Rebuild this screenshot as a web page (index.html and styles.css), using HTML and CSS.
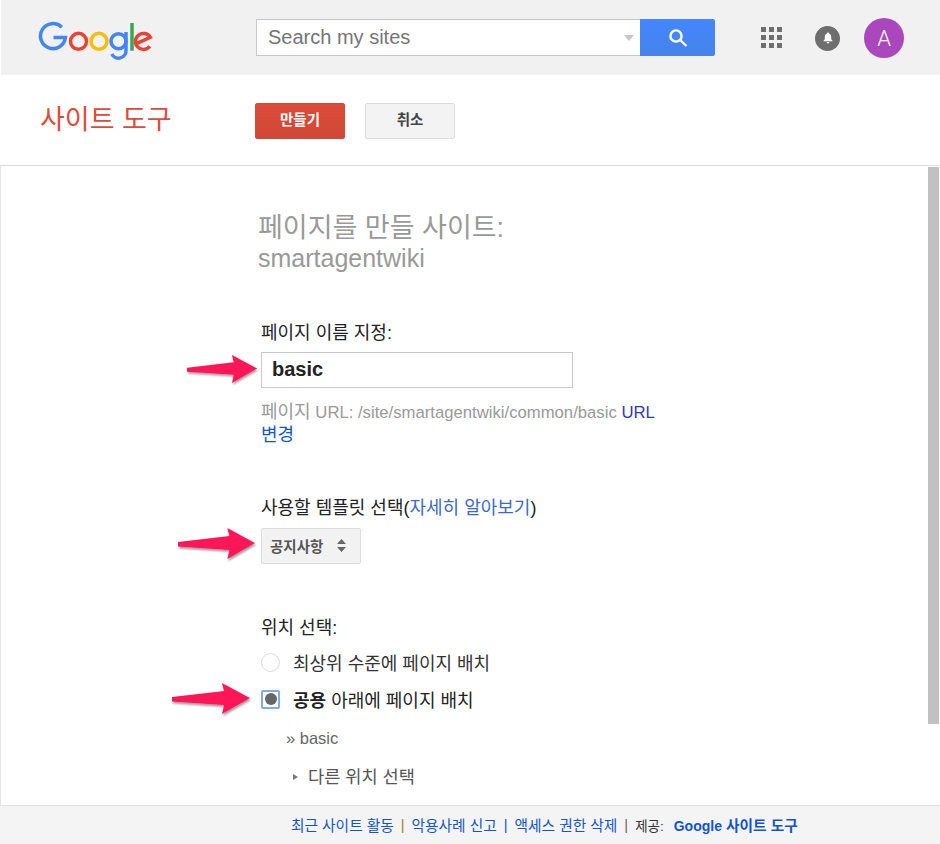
FILE: index.html
```html
<!DOCTYPE html>
<html lang="ko">
<head>
<meta charset="utf-8">
<title>사이트 도구</title>
<link rel="stylesheet" href="styles.css">
</head>
<body>
<header class="topbar">
  <svg class="logo" role="img" aria-label="Google" width="116" height="40" viewBox="37 20 116 40" fill="none" stroke-width="3.500">
    <path stroke="#4285f4" d="M60.800 27.200A12.500 12.500 0 1 0 64.400 37.500H52.500"/>
    <circle stroke="#ea4335" cx="77.500" cy="41.300" r="8"/>
    <circle stroke="#fbbc05" cx="98" cy="41.300" r="8"/>
    <circle stroke="#4285f4" cx="117.500" cy="41.300" r="7.500"/>
    <path stroke="#4285f4" d="M125 32V50.500A7.500 7.500 0 0 1 110.800 54"/>
    <path stroke="#34a853" d="M131 23V50.700"/>
    <path stroke="#ea4335" d="M148.800 46.300A8 8 0 1 1 149.300 37.300L136 43.300"/>
  </svg>
  <div class="search">
    <div class="search-box"><span class="search-text">Search my sites</span><span class="search-caret"></span></div>
    <div class="search-btn">
      <svg width="20" height="20" viewBox="0 0 20 20" fill="none" stroke="#fff" stroke-width="2.400"><circle cx="8" cy="8" r="5.600"/><path d="M12.200 12l6.300 6"/></svg>
    </div>
  </div>
  <div class="top-icons">
    <div class="apps"><i></i><i></i><i></i><i></i><i></i><i></i><i></i><i></i><i></i></div>
    <div class="bell">
      <svg width="14" height="14" viewBox="0 0 14 14" fill="#fff"><path d="M7 1.500c.7 0 1.100.5 1.100 1 1.500.5 2.100 1.700 2.100 3.300v2.500l1.300 1.400v.6h-9v-.6l1.300-1.400v-2.500c0-1.600.6-2.800 2.100-3.300 0-.5.4-1 1.100-1zM5.600 11h2.800c0 .8-.6 1.400-1.400 1.400s-1.400-.6-1.400-1.400z"/></svg>
    </div>
    <div class="avatar">A</div>
  </div>
</header>
<section class="toolbar">
  <h1 class="site-title">사이트 도구</h1>
  <button class="btn btn-primary">만들기</button>
  <button class="btn btn-default">취소</button>
</section>
<main class="content">
  <div class="scrollbar"></div>
  <div class="form">
    <h2 class="heading">페이지를 만들 사이트:<br><span class="heading-latin">smartagentwiki</span></h2>
    <label class="label name-label">페이지 이름 지정:</label>
    <div class="with-arrow">
      <svg class="arrow arrow-1" viewBox="0 0 79 31" preserveAspectRatio="none"><use href="#arrow"/></svg>
      <div class="name-input">basic</div>
    </div>
    <p class="url"><span class="ko">페이지</span> URL: /site/smartagentwiki/common/basic <a class="link-dark">URL</a><br><a class="ko">변경</a></p>
    <label class="label tpl-label">사용할 템플릿 선택(<a>자세히 알아보기</a>)</label>
    <div class="with-arrow">
      <svg class="arrow arrow-2" viewBox="0 0 79 31" preserveAspectRatio="none"><use href="#arrow"/></svg>
      <div class="select">공지사항
        <svg width="11" height="15" viewBox="0 0 11 15" fill="#666"><path d="M5.500 1l4.500 5h-9zM1 9h9l-4.500 5z"/></svg>
      </div>
    </div>
    <label class="label loc-label">위치 선택:</label>
    <div class="radio-row first"><span class="radio"></span><span>최상위 수준에 페이지 배치</span></div>
    <div class="radio-row with-arrow">
      <svg class="arrow arrow-3" viewBox="0 0 79 31" preserveAspectRatio="none"><use href="#arrow"/></svg>
      <span class="radio checked"></span><span><b>공용</b> 아래에 페이지 배치</span>
    </div>
    <div class="crumb">» basic</div>
    <div class="other"><span class="tri"></span>다른 위치 선택</div>
  </div>
</main>
<footer class="footer">
  <a>최근 사이트 활동</a><span class="sep sep-gold">|</span><a>악용사례 신고</a><span class="sep sep-blue">|</span><a>액세스 권한 삭제</a><span class="sep sep-dark">|</span><span class="by">제공:</span><a class="brand"><span class="brand-latin">Google</span> 사이트 도구</a>
</footer>
<svg class="defs" width="0" height="0">
  <defs>
    <filter id="sh" x="-10%" y="-20%" width="125%" height="150%"><feDropShadow dx="1" dy="2" stdDeviation="1.200" flood-color="#000" flood-opacity=".4"/></filter>
    <g id="arrow"><path d="M0 14L52 8 50 0 78 15 50 31 52 22 0 18.500z" fill="#ff1659" filter="url(#sh)"/></g>
  </defs>
</svg>
</body>
</html>
```
FILE: styles.css
```css
* { box-sizing: border-box; }
html, body { margin: 0; height: 844px; overflow: hidden; }
body { font-family: "Liberation Sans", "Noto Sans CJK KR", sans-serif; font-size: 18px; color: #222; background: #fff; position: relative; display: flex; flex-direction: column; }
a { color: #1155cc; }
.topbar { height: 75px; background: #f1f1f1; display: flex; align-items: flex-start; flex: none; padding-left: 37px; border-left: 1px solid #fff; }
.logo { margin-top: 20px; flex: none; }
.search { display: flex; margin: 19px 0 0 102px; height: 37px; }
.search-box { width: 384px; border: 1px solid #c9c9c9; border-width: 1px 0 1px 1px; border-top-color: #c4c4c4; background: #fff; display: flex; align-items: center; justify-content: space-between; padding: 0 6px 0 11px; }
.search-text { font-size: 20px; color: #757575; }
.search-caret { width: 0; height: 0; border: 5px solid transparent; border-top: 6px solid #c8c8c8; border-bottom: 0; }
.search-btn { width: 75px; background: linear-gradient(#4387fd, #4683ea); border-radius: 0 2px 2px 0; display: flex; align-items: center; justify-content: center; }
.top-icons { display: flex; align-items: center; margin-left: 46px; margin-top: 18px; }
.apps { display: grid; grid-template-columns: repeat(3, 5px); grid-auto-rows: 5px; gap: 3px; width: 21px; margin: -2px 0 0 0; }
.apps i { background: #6e6e6e; display: block; }
.bell { width: 25px; height: 25px; border-radius: 50%; background: #6e6e6e; margin-left: 33px; display: flex; align-items: center; justify-content: center; }
.avatar { width: 40px; height: 40px; border-radius: 50%; background: #ab47bc; color: #fff; margin-left: 24px; font-size: 22px; font-weight: 300; display: flex; align-items: center; justify-content: center; font-family: "Roboto", sans-serif; }
.toolbar { height: 91px; flex: none; border-bottom: 1px solid #ddd; display: flex; align-items: flex-start; padding-left: 40px; }
.site-title { margin: 27px 0 0; width: 215px; font-size: 27px; line-height: 36px; font-weight: 400; color: #dd4b39; flex: none; }
.btn { height: 36px; width: 90px; margin-top: 28px; border-radius: 2px; font-family: inherit; font-size: 14.500px; font-weight: 700; padding: 0 0 6px; }
.btn-primary { background: linear-gradient(#dd4b39, #d14836); border: 1px solid #d44a38; color: #fff; }
.btn-default { background: #f3f3f3; border: 1px solid #dcdcdc; color: #444; margin-left: 20px; }
.content { flex: 1; position: relative; overflow: hidden; border-left: 1px solid #e4e4e4; }
.scrollbar { position: absolute; right: 1px; top: 1px; width: 11px; height: 557px; background: #c1c1c1; }
.form { padding: 47px 0 0 256px; }
.heading { margin: 0 0 48px 1px; font-size: 27px; line-height: 30px; font-weight: 400; color: #999; }
.heading-latin { font-size: 25px; }
.label { display: block; color: #222; line-height: 24px; margin-left: 4px; }
.name-label { margin-bottom: 7px; }
.with-arrow { position: relative; }
.arrow { position: absolute; overflow: visible; }
.arrow-1 { left: -70px; top: 3px; width: 71px; height: 28px; }
.arrow-2 { left: -79px; top: 0; width: 78px; height: 31px; }
.arrow-3 { left: -89px; top: -5px; width: 79px; height: 31px; }
.name-input { margin-left: 4px; width: 312px; height: 36px; border: 1px solid #c9c9c9; background: #fff; font-size: 20px; font-weight: 700; line-height: 33px; padding-left: 10px; color: #222; }
.url { margin: 13px 0 0 4px; font-size: 16.700px; line-height: 23px; color: #999; width: 410px; }
.url .ko { font-size: 18px; }
.url a { color: #1155cc; }
.url .link-dark { color: #3333bb; }
.tpl-label { margin-top: 49px; }
.tpl-label a { color: #3b69c9; }
.select { margin: 8px 0 0 4px; width: 100px; height: 36px; background: #f2f2f2; border: 1px solid #dcdcdc; border-radius: 2px; font-size: 14.500px; font-weight: 700; color: #555; display: flex; align-items: center; justify-content: space-between; padding: 0 13px 2px 8px; }
.loc-label { margin-top: 52px; }
.radio-row { display: flex; align-items: center; height: 22px; margin-left: 4px; color: #222; }
.radio-row.first { margin-top: 11px; color: #333; }
.radio-row.with-arrow { margin-top: 15px; }
.radio { width: 19px; height: 19px; border-radius: 50%; border: 1px solid #dcdcdc; background: #fff; margin-right: 13px; flex: none; }
.radio.checked { position: relative; border: 2px solid #80a9f5; border-radius: 2px; }
.radio.checked::after { content: ""; position: absolute; left: 1.500px; top: 1.500px; width: 12px; height: 12px; border-radius: 50%; background: #666; }
.radio-row b { font-weight: 700; }
.crumb { margin: 16px 0 0 29px; color: #666; line-height: 24px; font-size: 16.500px; }
.other { margin: 15px 0 0 36px; color: #555; line-height: 24px; font-size: 17.600px; display: flex; align-items: center; }
.tri { width: 0; height: 0; border: 3.500px solid transparent; border-left: 5px solid #777; border-right: 0; margin-right: 10px; }
.footer { position: absolute; left: 0; right: 0; bottom: 0; height: 39px; background: #f4f4f4; border-top: 1px solid #e2e2e2; display: flex; align-items: center; padding-left: 291px; font-size: 14.700px; padding-bottom: 1px; }
.footer a { color: #1155cc; }
.sep { margin: 0 7px; }
.sep-gold { color: #a08030; }
.sep-blue { color: #1155cc; }
.sep-dark { color: #666; }
.by { color: #333; margin-right: 10px; font-size: 13.500px; }
.brand { font-weight: 700; }
.brand-latin { font-size: 14px; }
.defs { position: absolute; }
```
